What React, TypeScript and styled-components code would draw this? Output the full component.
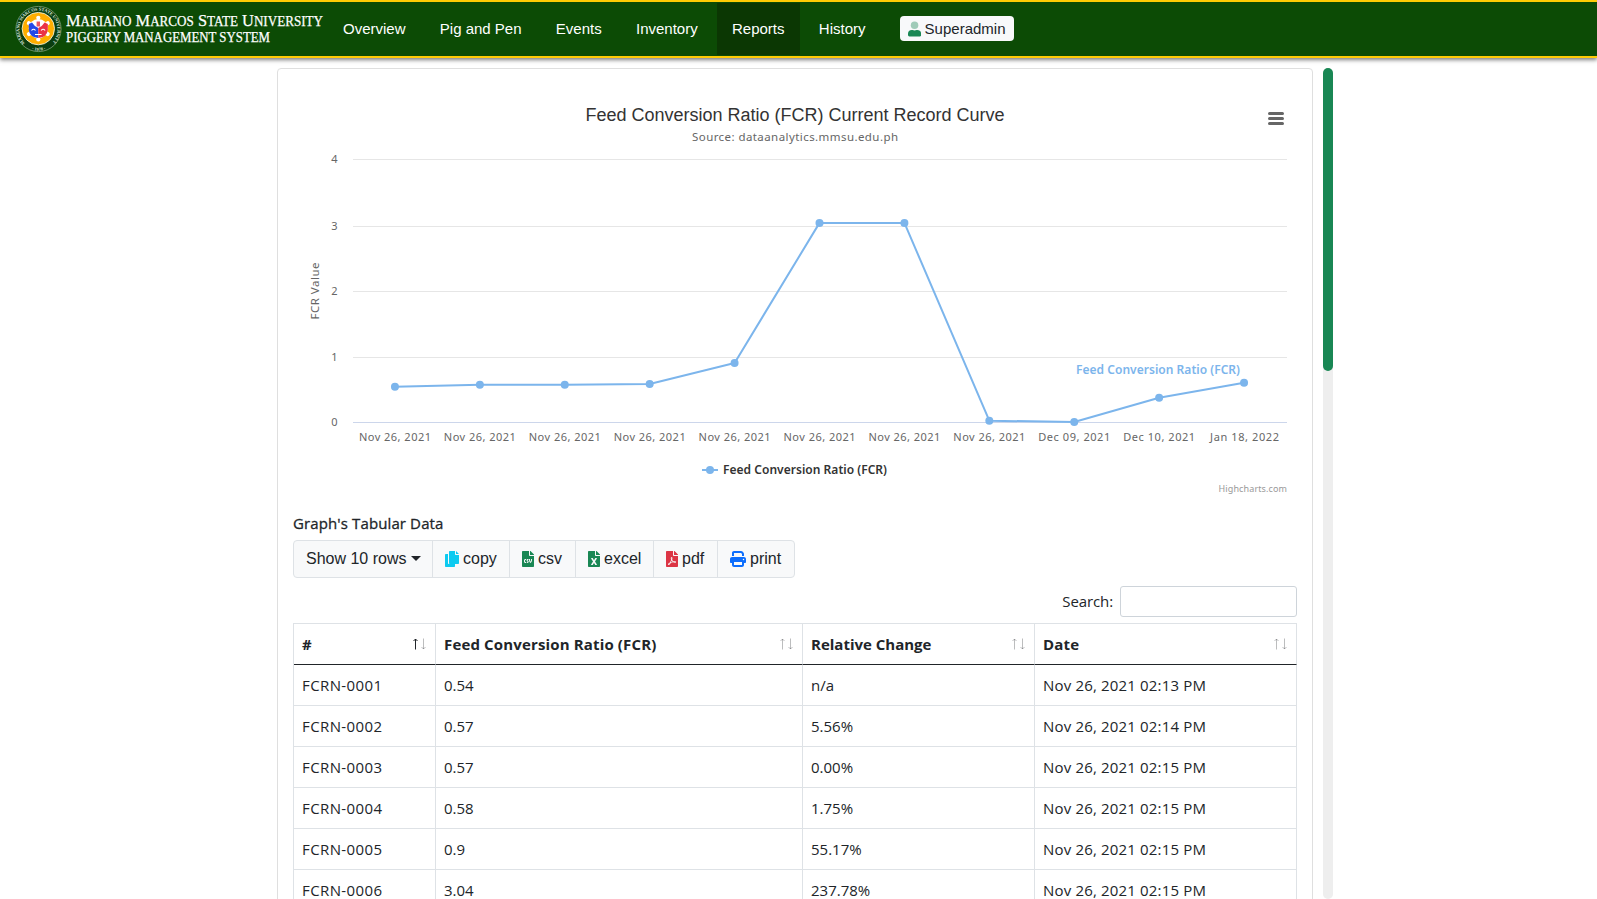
import React from 'react';
import styled, { createGlobalStyle, css } from 'styled-components';
import { FaFileCsv, FaFileExcel, FaFilePdf } from 'react-icons/fa';
import { FaPrint } from 'react-icons/fa6';

const GlobalStyle = createGlobalStyle`
  *, *::before, *::after { box-sizing: border-box; }
  html, body { margin: 0; height: 100%; overflow: hidden; background: #fff; }
  body { color: #212529; font: 15px/24px "Open Sans", "Noto Sans", sans-serif; }
`;

const sans = '"Liberation Sans", Arial, sans-serif';
const chartSans = '"Noto Sans", "Open Sans", sans-serif';

const Page = styled.div`
  display: flex;
  flex-direction: column;
  height: 899px;
  overflow: hidden;
`;

const Navbar = styled.header`
  display: flex;
  align-items: center;
  flex: none;
  height: 58px;
  padding-left: 15px;
  background: #0c4b05;
  border: solid #ffcb05;
  border-width: 2px 0;
  box-shadow: 0 2px 4px rgba(0, 0, 0, 0.5);
`;

const Brand = styled.svg`
  flex: none;
  display: block;
`;

const Nav = styled.nav`
  display: flex;
  gap: 4.3px;
`;

const NavItem = styled.a<{ $active?: boolean }>`
  padding: 0 15px;
  height: 52px;
  line-height: 51px;
  font-family: ${sans};
  font-size: 15px;
  color: #fff;
  white-space: nowrap;
  ${(p) => p.$active && css`background: #0b3703;`}
`;

const UserButton = styled.button`
  display: flex;
  align-items: center;
  gap: 4px;
  width: 114px;
  height: 25px;
  margin: 0 0 1px 19px;
  padding: 0 8px;
  border: 0;
  border-radius: 4px;
  background: #f8f9fa;
  color: #212529;
  font: 15px ${sans};
`;

const Main = styled.main`
  display: flex;
  flex: 1;
  min-height: 0;
  gap: 10px;
  padding: 10px 0 0 277px;
`;

const Card = styled.section`
  width: 1036px;
  height: 900px;
  padding: 15px;
  border: 1px solid #dfdfdf;
  border-radius: 4px;
  background: #fff;
`;

const ScrollTrack = styled.div`
  width: 10px;
  height: 831px;
  border-radius: 5px;
  background: #eee;
`;

const ScrollThumb = styled.div`
  height: 303px;
  border-radius: 5px;
  background: #198754;
`;

const Chart = styled.svg`
  display: block;
  font-family: ${chartSans};
`;

const Heading = styled.h6`
  margin: 3px 0 5px;
  font-size: 15px;
  font-weight: 500;
  line-height: 24px;
  letter-spacing: 0.12px;
  -webkit-text-stroke: 0.3px #212529;
`;

const Toolbar = styled.div`
  display: inline-flex;
  height: 38px;
  border: 1px solid #dee2e6;
  border-radius: 4px;
  background: #f8f9fa;
  vertical-align: top;
`;

const ToolButton = styled.button<{ $width: number }>`
  display: flex;
  align-items: center;
  gap: 4px;
  width: ${(p) => p.$width}px;
  padding: 0 0 0 12px;
  border: 0;
  border-right: 1px solid #dee2e6;
  background: none;
  color: #212529;
  font: 16px ${sans};
  white-space: nowrap;
  &:last-child { border-right: 0; }
  svg { margin-bottom: 1px; }
`;

const FileIcon = styled.span`
  display: flex;
  justify-content: center;
  width: 12px;
  svg { flex: none; }
`;

const Caret = styled.span`
  border: 5px solid transparent;
  border-top-color: #212529;
  border-bottom: 0;
  margin-bottom: 2px;
`;

const SearchRow = styled.label`
  display: flex;
  justify-content: flex-end;
  align-items: center;
  gap: 7px;
  margin: 8px 0 6px;
  letter-spacing: -0.1px;
  line-height: 22px;
`;

const SearchLabel = styled.span`
  padding-bottom: 2px;
`;

const SearchInput = styled.input`
  width: 177px;
  height: 31px;
  border: 1px solid #ced4da;
  border-radius: 3px;
  background: #fff;
`;

const Table = styled.div`
  border: solid #dee2e6;
  border-width: 1px 0 0 1px;
`;

const Row = styled.div`
  display: grid;
  grid-template-columns: 142px 367px 232px 262px;
  height: 41px;
`;

const Cell = styled.div<{ $head?: boolean }>`
  display: flex;
  align-items: center;
  justify-content: space-between;
  padding: 0 9px 0 8px;
  border: solid #dee2e6;
  border-width: 0 1px 1px 0;
  &:nth-child(1) { letter-spacing: 0.4px; }
  &:nth-child(4) { letter-spacing: 0.17px; }
  ${(p) => p.$head && css`
    font-weight: 700;
    border-bottom-color: #212529;
    &:nth-child(2) { letter-spacing: 0.15px; }
  `}
`;

const navItems = ['Overview', 'Pig and Pen', 'Events', 'Inventory', 'Reports', 'History'];

const points: [string, number][] = [
  ['Nov 26, 2021', 0.54],
  ['Nov 26, 2021', 0.57],
  ['Nov 26, 2021', 0.57],
  ['Nov 26, 2021', 0.58],
  ['Nov 26, 2021', 0.9],
  ['Nov 26, 2021', 3.04],
  ['Nov 26, 2021', 3.04],
  ['Nov 26, 2021', 0.02],
  ['Dec 09, 2021', 0],
  ['Dec 10, 2021', 0.37],
  ['Jan 18, 2022', 0.6],
];

const rows = [
  ['FCRN-0001', '0.54', 'n/a', 'Nov 26, 2021 02:13 PM'],
  ['FCRN-0002', '0.57', '5.56%', 'Nov 26, 2021 02:14 PM'],
  ['FCRN-0003', '0.57', '0.00%', 'Nov 26, 2021 02:15 PM'],
  ['FCRN-0004', '0.58', '1.75%', 'Nov 26, 2021 02:15 PM'],
  ['FCRN-0005', '0.9', '55.17%', 'Nov 26, 2021 02:15 PM'],
  ['FCRN-0006', '3.04', '237.78%', 'Nov 26, 2021 02:15 PM'],
];

const columns = ['#', 'Feed Conversion Ratio (FCR)', 'Relative Change', 'Date'];

const BrandLogo = () => (
  <Brand width="313" height="54" viewBox="15 2 313 54">
    <defs>
      <path id="seal-top" d="M25 43 A19 19 0 1 1 52 43" />
      <path id="seal-bottom" d="M29 48.500 A21.500 21.500 0 0 0 48 48.500" />
    </defs>
    <circle cx="38.5" cy="29" r="22.6" fill="#0b3d10" stroke="#7da07b" strokeWidth="0.8" />
    <g fill="#dfe9dc" fontFamily="Liberation Serif, serif" fontWeight="700" fontSize="4.4">
      <text textLength="88" lengthAdjust="spacingAndGlyphs"><textPath href="#seal-top">MARIANO MARCOS STATE UNIVERSITY</textPath></text>
      <text fontSize="4.4"><textPath href="#seal-bottom" startOffset="3">· 1978 ·</textPath></text>
    </g>
    <circle cx="38.3" cy="28.6" r="16.2" fill="#ffae00" stroke="#eef0d8" strokeWidth="0.9" />
    <g fill="#fff">
      {[0, 60, 120, 180, 240, 300].map((a) => (
        <circle key={a} cx="38.3" cy="17.8" r="2.1" transform={`rotate(${a} 38.3 28.6)`} />
      ))}
      <circle cx="38.3" cy="28.6" r="9.6" />
    </g>
    <path d="M28.800 24 L32 22.500 Q34 26 38.300 28 V38 Q29.500 37 28.800 30Z" fill="#2448e8" />
    <path d="M47.800 24 L44.600 22.500 Q42.600 26 38.300 28 V38 Q47.100 37 47.800 30Z" fill="#ea3346" />
    <path d="M36.600 21.500h3.400v5h-3.400z" fill="#ea5560" />
    <path d="M31.500 30.500q2-2.500 4 0M45.100 30.500q-2-2.500-4 0M35 34.500h6.600" stroke="#fff" strokeWidth="1.1" fill="none" />
    <g fill="#fff" stroke="#fff" strokeWidth="0.25" fontFamily="Liberation Serif, serif">
      <text x="66" y="26" fontSize="17.5" textLength="257" lengthAdjust="spacingAndGlyphs">
        M<tspan fontSize="14">ARIANO</tspan> M<tspan fontSize="14">ARCOS</tspan> S<tspan fontSize="14">TATE</tspan> U<tspan fontSize="14">NIVERSITY</tspan>
      </text>
      <text x="66" y="42" fontSize="14.2" textLength="204" lengthAdjust="spacingAndGlyphs">PIGGERY MANAGEMENT SYSTEM</text>
    </g>
  </Brand>
);

const UserIcon = () => (
  <svg width="14" height="16" viewBox="0 0 448 512" fill="#198754">
    <circle cx="224" cy="128" r="128" opacity="0.4" />
    <path d="M314 288h-17a174 174 0 0 1-146 0h-17A134 134 0 0 0 0 422v42a48 48 0 0 0 48 48h352a48 48 0 0 0 48-48v-42a134 134 0 0 0-134-134z" />
  </svg>
);

const CopyIcon = () => (
  <svg width="14" height="16" viewBox="0 0 14 16" fill="#0dcaf0">
    <path d="M0 3.8Q0 3 .8 3H3v9.2Q3 13 3.8 13H10v2.2q0 .8-.8.8H.8Q0 16 0 15.200z" />
    <path d="M4 .8Q4 0 4.800 0H10v3.300q0 .7.7.7H14v8.200q0 .8-.8.8H4.800Q4 13 4 12.200zM11 0l3 3h-3z" />
  </svg>
);

const SortArrows = ({ asc }: { asc?: boolean }) => (
  <svg width="14" height="12" viewBox="0 0 14 12" fill="none" stroke="#212529">
    <path d="M3.500 11.500V1M1.500 3L3.500 1L5.500 3" opacity={asc ? 1 : 0.3} />
    <path d="M11.500 .5V11M9.500 9L11.500 11L13.500 9" opacity="0.3" />
  </svg>
);

const px = (i: number) => 59.5 + (934 / 11) * (i + 0.5);
const py = (v: number) => 338 - v * 65.5;

const FcrChart = () => (
  <Chart width="1004" height="424" viewBox="0 0 1004 424">
    <text x="292.5" y="37" fontSize="18" fill="#333" fontFamily="Liberation Sans, Arial, sans-serif" textLength="419">
      Feed Conversion Ratio (FCR) Current Record Curve
    </text>
    <text x="399" y="57" fontSize="11.5" fill="#666" textLength="206">Source: dataanalytics.mmsu.edu.ph</text>
    <path d="M976.500 29.500h13M976.500 34.500h13M976.500 39.500h13" stroke="#666" strokeWidth="3" strokeLinecap="round" />
    {[[4, 75.5], [3, 142.5], [2, 207.5], [1, 273.5], [0, 338.5]].map(([n, y]) => (
      <g key={n}>
        <path d={`M60 ${y}H994`} stroke={n ? '#e6e6e6' : '#ccd6eb'} />
        <text x="44.500" y={y + 3.5} fontSize="11" fill="#666" textAnchor="end">{n}</text>
      </g>
    ))}
    <text transform="translate(26 235.500) rotate(-90)" fontSize="11.500" fill="#666" textLength="57">FCR Value</text>
    <polyline points={points.map(([, v], i) => `${px(i)},${py(v)}`).join(' ')} fill="none" stroke="#7cb5ec" strokeWidth="2" strokeLinejoin="round" />
    {points.map(([date, v], i) => (
      <g key={i}>
        <circle cx={px(i)} cy={py(v)} r="4" fill="#7cb5ec" />
        <text x={px(i) - (i > 9 ? 34 : 36)} y="357" fontSize="11" fill="#666" textLength={i > 9 ? 69 : 72}>{date}</text>
      </g>
    ))}
    <text x="783" y="290" fontSize="12" fontWeight="600" fill="#7cb5ec" textLength="164">Feed Conversion Ratio (FCR)</text>
    <path d="M409 386h16" stroke="#7cb5ec" strokeWidth="2" />
    <circle cx="417" cy="386" r="4" fill="#7cb5ec" />
    <text x="430" y="390" fontSize="12" fontWeight="600" fill="#333" textLength="164">Feed Conversion Ratio (FCR)</text>
    <text x="925.5" y="408" fontSize="9" fill="#999" textLength="68.5">Highcharts.com</text>
  </Chart>
);

export default function App() {
  return (
    <Page>
      <GlobalStyle />
      <Navbar>
        <BrandLogo />
        <Nav>
          {navItems.map((name) => (
            <NavItem key={name} $active={name === 'Reports'}>{name}</NavItem>
          ))}
        </Nav>
        <UserButton><UserIcon />Superadmin</UserButton>
      </Navbar>
      <Main>
        <Card>
          <FcrChart />
          <Heading>Graph's Tabular Data</Heading>
          <Toolbar>
            <ToolButton $width={139}>Show 10 rows<Caret /></ToolButton>
            <ToolButton $width={77}><CopyIcon />copy</ToolButton>
            <ToolButton $width={66}><FileIcon><FaFileCsv color="#198754" size={16} /></FileIcon>csv</ToolButton>
            <ToolButton $width={78}><FileIcon><FaFileExcel color="#198754" size={16} /></FileIcon>excel</ToolButton>
            <ToolButton $width={64}><FileIcon><FaFilePdf color="#dc3545" size={16} /></FileIcon>pdf</ToolButton>
            <ToolButton $width={76}><FaPrint color="#0d6efd" size={16} />print</ToolButton>
          </Toolbar>
          <SearchRow><SearchLabel>Search:</SearchLabel><SearchInput /></SearchRow>
          <Table>
            <Row>
              {columns.map((name, i) => (
                <Cell key={name} $head>{name}<SortArrows asc={i === 0} /></Cell>
              ))}
            </Row>
            {rows.map((row) => (
              <Row key={row[0]}>
                {row.map((value, i) => <Cell key={i}>{value}</Cell>)}
              </Row>
            ))}
          </Table>
        </Card>
        <ScrollTrack><ScrollThumb /></ScrollTrack>
      </Main>
    </Page>
  );
}
